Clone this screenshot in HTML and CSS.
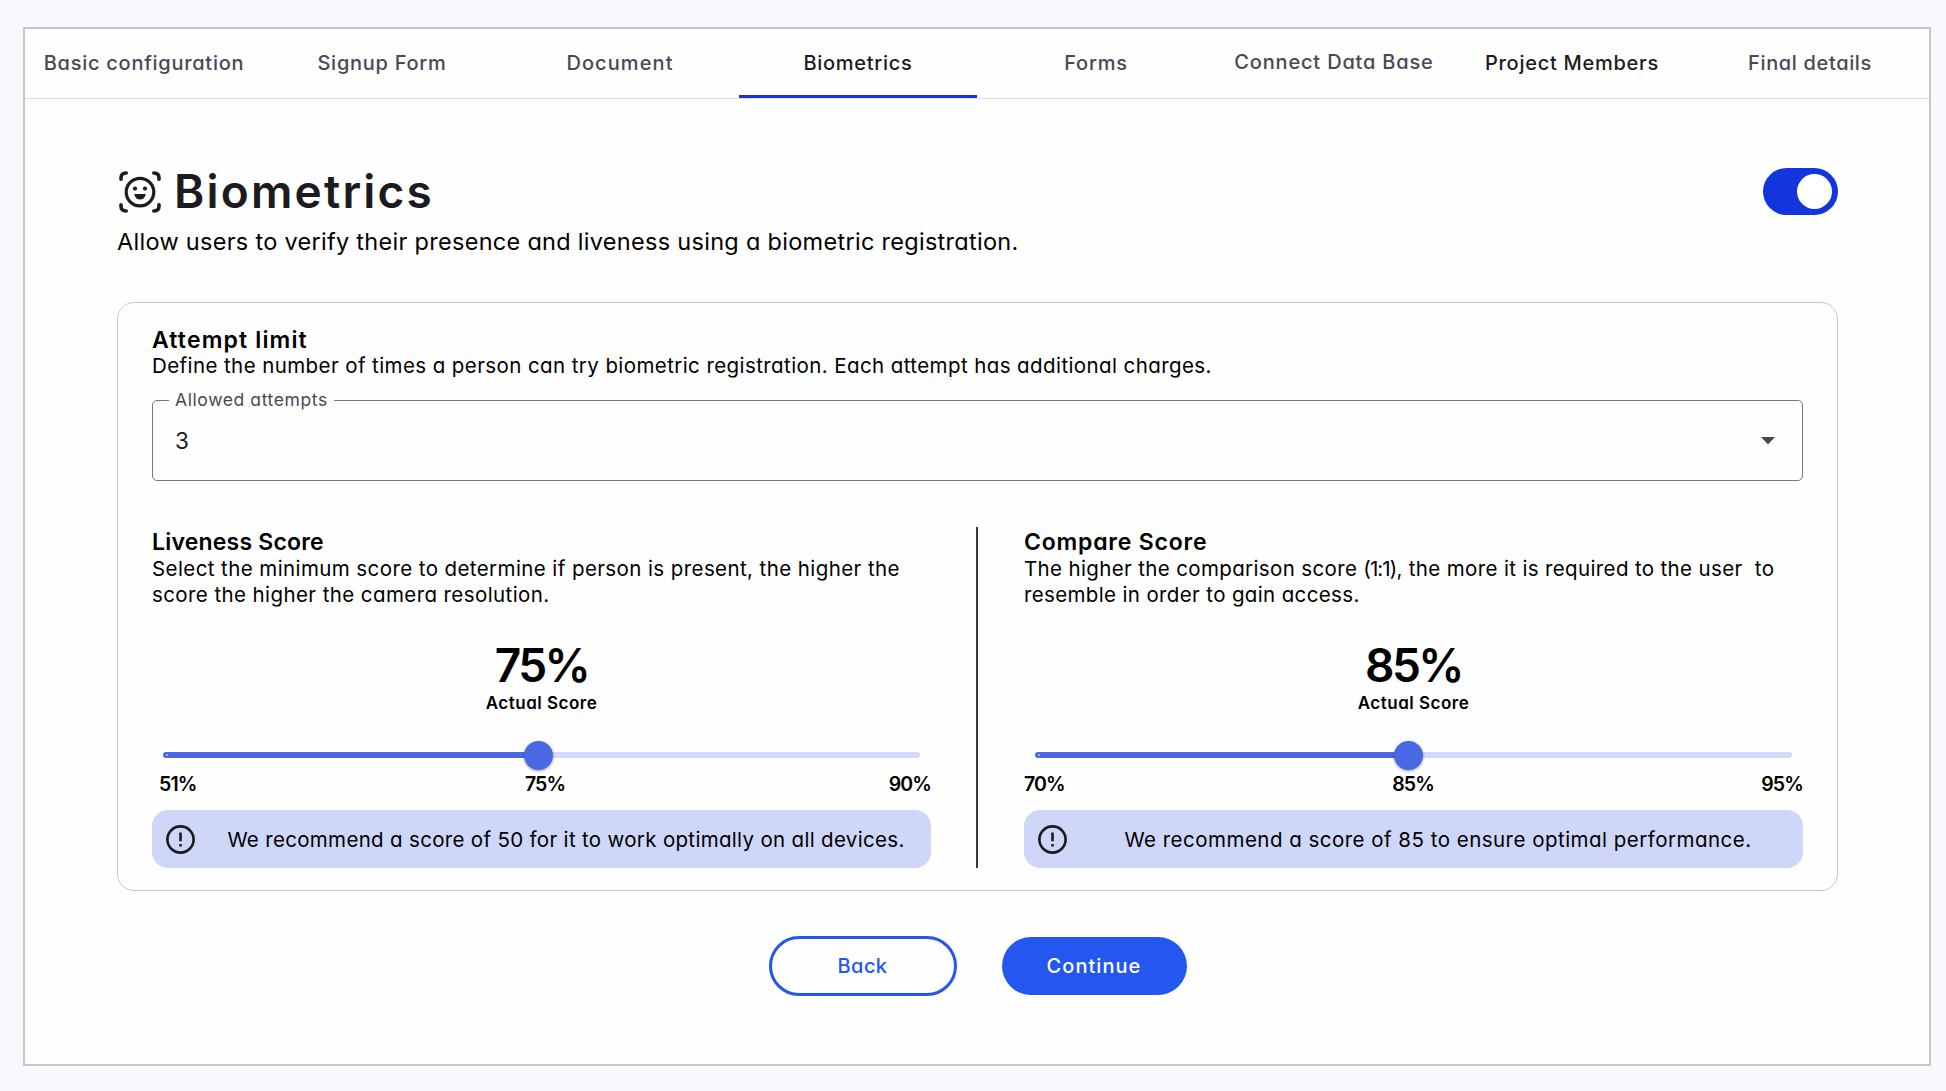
FILE: index.html
```html
<!DOCTYPE html>
<html lang="en">
<head>
<meta charset="utf-8">
<title>Biometrics</title>
<link rel="stylesheet" href="styles.css">
</head>
<body>
<main class="frame">
  <nav class="tabs">
    <a class="tab">Basic configuration</a>
    <a class="tab">Signup Form</a>
    <a class="tab tab-wide">Document</a>
    <a class="tab tab-active">Biometrics</a>
    <a class="tab">Forms</a>
    <a class="tab tab-raised">Connect Data Base</a>
    <a class="tab tab-dark">Project Members</a>
    <a class="tab tab-tight">Final details</a>
  </nav>
  <section class="content">
    <header class="head">
      <svg class="face" viewBox="0 0 42 42" fill="none" stroke="currentColor">
        <path stroke-width="3.6" stroke-linecap="round" d="M2 8.2V7Q2 2 7 2H7.2M34.8 2H35Q40 2 40 7V8.2M40 33.8V35Q40 40 35 40H34.8M7.2 40H7Q2 40 2 35V33.8"/>
        <circle cx="21" cy="21.1" r="13.8" stroke-width="3.2"/>
        <g fill="currentColor" stroke="none">
          <circle cx="16" cy="17.6" r="2.1"/><circle cx="26" cy="17.6" r="2.1"/>
          <path d="M16 22.9H26Q27 22.9 26.7 24Q25 28.5 21 28.5Q17 28.5 15.3 24Q15 22.9 16 22.9Z"/>
        </g>
      </svg>
      <h1 class="title">Biometrics</h1>
      <span class="toggle"><span class="knob"></span></span>
    </header>
    <p class="subtitle">Allow users to verify their presence and liveness using a biometric registration.</p>

    <div class="card">
      <h2 class="heading heading-wide">Attempt limit</h2>
      <p class="text">Define the number of times a person can try biometric registration. Each attempt has additional charges.</p>
      <fieldset class="select">
        <legend class="legend">Allowed attempts</legend>
        <span class="value">3</span>
        <svg class="arrow" viewBox="0 0 14 8"><path d="M0 0H14L7 7.5Z" fill="currentColor"/></svg>
      </fieldset>

      <div class="scores">
        <section class="score">
          <h2 class="heading heading-tight">Liveness Score</h2>
          <p class="text">Select the minimum score to determine if person is present, the higher the<br>score the higher the camera resolution.</p>
          <div class="percent">75%</div>
          <div class="caption">Actual Score</div>
          <div class="slider">
            <span class="fill" style="width:376px"><span class="dot"></span></span>
            <span class="thumb"></span>
            <span class="rest"></span>
          </div>
          <div class="marks marks-inset"><span>51%</span><span class="mid">75%</span><span>90%</span></div>
          <div class="info">
            <svg class="alert" viewBox="0 0 29 29" fill="none" stroke="currentColor" stroke-width="2.6"><circle cx="14.5" cy="14.5" r="13.1"/><path d="M14.5 7.6V16.2M14.5 18.9V21.5"/></svg>
            <span class="note">We recommend a score of 50 for it to work optimally on all devices.</span>
          </div>
        </section>
        <div class="divider"></div>
        <section class="score">
          <h2 class="heading">Compare Score</h2>
          <p class="text text-tight">The higher the comparison score <span class="ratio">(1:1)</span>, the more it is required to the user&nbsp; to<br>resemble in order to gain access.</p>
          <div class="percent">85%</div>
          <div class="caption">Actual Score</div>
          <div class="slider">
            <span class="fill" style="width:374px"><span class="dot"></span></span>
            <span class="thumb"></span>
            <span class="rest"></span>
          </div>
          <div class="marks"><span>70%</span><span>85%</span><span>95%</span></div>
          <div class="info">
            <svg class="alert" viewBox="0 0 29 29" fill="none" stroke="currentColor" stroke-width="2.6"><circle cx="14.5" cy="14.5" r="13.1"/><path d="M14.5 7.6V16.2M14.5 18.9V21.5"/></svg>
            <span class="note note-wide">We recommend a score of 85 to ensure optimal performance.</span>
          </div>
        </section>
      </div>
    </div>

    <div class="actions">
      <button class="btn btn-back">Back</button>
      <button class="btn btn-next">Continue</button>
    </div>
  </section>
</main>
</body>
</html>
```
FILE: styles.css
```css
* { box-sizing: border-box; }

body {
  margin: 0;
  height: 1091px;
  padding: 27px 15px 25px 23px;
  background: #f8f9fd;
  color: #000;
  font-family: Inter, "Open Sans", sans-serif;
  font-feature-settings: "cv11";
}

h1, h2, p { margin: 0; }

.frame {
  height: 1039px;
  border: 2px solid #c5c6ca;
  background: #f8f9fd;
  display: flex;
  flex-direction: column;
}

.tabs {
  flex: none;
  height: 70px;
  display: grid;
  grid-template-columns: repeat(8, 1fr);
  background: #fefefe;
  border-bottom: 1px solid #dfdce6;
  border-top-left-radius: 12px;
}

.tab {
  display: flex;
  align-items: center;
  justify-content: center;
  font-size: 20px;
  font-weight: 500;
  letter-spacing: 0.73px;
  color: #4b4753;
  border: solid transparent;
  border-width: 3px 0;
  padding-bottom: 1px;
  white-space: nowrap;
}
.tab-wide { letter-spacing: 1.1px; }
.tab-tight { letter-spacing: 0.65px; }
.tab-raised { padding-bottom: 3px; letter-spacing: 0.82px; }
.tab-dark { color: #1c1b1f; }
.tab-active { color: #1c1b1f; border-bottom-color: #1235de; }

.content {
  flex: 1;
  padding: 69px 91px 0 92px;
  background: #fefefe;
}

.head {
  height: 47px;
  display: flex;
  align-items: center;
  color: #1c1b1f;
}
.face { width: 42px; height: 42px; margin: 0 13px 0 2px; }
.title {
  flex: 1;
  font-size: 46px;
  line-height: 47px;
  font-weight: 600;
  letter-spacing: 2.2px;
}
.toggle {
  width: 75px;
  height: 47px;
  padding: 6px;
  border-radius: 24px;
  background: #1235de;
  display: flex;
  justify-content: flex-end;
}
.knob { width: 35px; height: 35px; border-radius: 50%; background: #fff; }

.subtitle {
  margin: 9px 0 42px;
  font-size: 23.5px;
  line-height: 36px;
  letter-spacing: 0.29px;
}

.card {
  height: 589px;
  padding: 24px 34px 0;
  border: 1px solid #c3c8d6;
  border-radius: 17px;
}
.heading {
  font-size: 23px;
  line-height: 26px;
  font-weight: 600;
  letter-spacing: 0.8px;
}
.heading-wide { letter-spacing: 1.15px; line-height: 26px; }
.heading-tight { letter-spacing: 0.2px; }
.text {
  font-size: 20.5px;
  line-height: 26px;
  letter-spacing: 0.41px;
  white-space: nowrap;
}
.text-tight { letter-spacing: 0.36px; }
.ratio { letter-spacing: -0.9px; }

.select {
  margin: 10px 0 0;
  height: 92px;
  padding: 0 27px 0 22px;
  border: 1px solid #79767f;
  border-radius: 5px;
  display: flex;
  align-items: center;
  justify-content: space-between;
  min-width: 0;
}
.legend {
  height: 22px;
  margin-left: -6px;
  padding: 0 6px;
  font-size: 17.5px;
  line-height: 22px;
  letter-spacing: 0.6px;
  color: #4b4753;
}
.value { font-size: 22.5px; line-height: 30px; color: #1c1b1f; margin-bottom: 10px; }
.arrow { width: 14px; height: 8px; color: #49454f; margin-bottom: 10px; }

.scores {
  margin-top: 46px;
  height: 341px;
  display: grid;
  grid-template-columns: 779px 1fr 779px;
}
.divider { width: 2px; background: #3a393d; margin: 0 0 0 45px; }
.score { padding-top: 2px; }
.score .heading { line-height: 27px; }

.percent {
  margin-top: 32px;
  font-size: 46px;
  line-height: 50px;
  font-weight: 600;
  letter-spacing: -2.6px;
  text-align: center;
}
.caption {
  margin-top: 1px;
  font-size: 17px;
  line-height: 25px;
  font-weight: 600;
  letter-spacing: 0.5px;
  text-align: center;
}

.slider {
  height: 30px;
  margin: 24px 11px 0;
  display: flex;
  align-items: center;
}
.fill {
  height: 6px;
  margin-right: -15px;
  border-radius: 3px;
  background: #4a68e4;
  display: flex;
  align-items: center;
}
.dot { width: 2px; height: 2px; margin-left: 3px; border-radius: 50%; background: #b5c2f5; }
.thumb {
  flex: none;
  width: 29px;
  height: 29px;
  border-radius: 50%;
  background: #4a68e4;
  box-shadow: 0 1px 3px rgba(0, 0, 0, 0.4);
  z-index: 1;
}
.rest {
  flex: 1;
  height: 6px;
  margin-left: -2px;
  border-radius: 0 3px 3px 0;
  background: #d2dafc;
}

.marks {
  display: flex;
  justify-content: space-between;
  font-size: 19.5px;
  line-height: 28px;
  font-weight: 600;
  letter-spacing: -0.85px;
}
.marks-inset { padding-left: 7px; }
.mid { margin-left: 5px; }

.info {
  height: 58px;
  margin-top: 12px;
  padding: 0 14px;
  border-radius: 16px;
  background: #cfd7f8;
  display: flex;
  align-items: center;
  gap: 20px;
}
.alert { flex: none; width: 29px; height: 29px; color: #1c1b1f; }
.note {
  flex: 1;
  text-align: center;
  font-size: 20.5px;
  letter-spacing: 0.32px;
  white-space: nowrap;
}
.note-wide { letter-spacing: 0.48px; }

.actions {
  margin-top: 45px;
  display: flex;
  align-items: center;
  justify-content: center;
  gap: 45px;
}
.btn {
  padding: 0;
  font: 500 20px Inter, "Open Sans", sans-serif;
  font-feature-settings: "cv11";
  border-radius: 31px;
}
.btn-back {
  width: 188px;
  height: 60px;
  border: 3px solid #2457f0;
  background: #fefefe;
  color: #2457f0;
  letter-spacing: 0.4px;
}
.btn-next {
  width: 185px;
  height: 58px;
  border: 0;
  background: #2457f0;
  color: #fff;
  letter-spacing: 1.05px;
}
```
